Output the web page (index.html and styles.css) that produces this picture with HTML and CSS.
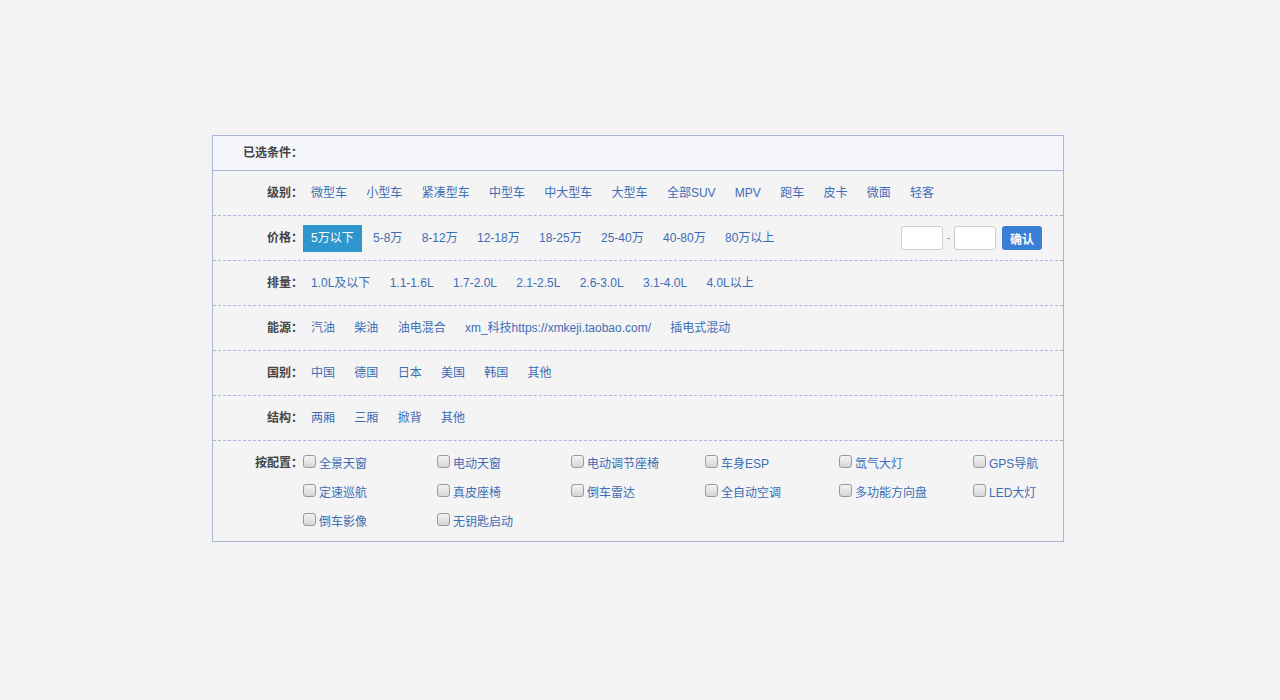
FILE: index.html
```html
<!DOCTYPE html>
<html lang="zh-CN">
<head>
<meta charset="utf-8">
<title>条件筛选</title>
<link rel="stylesheet" href="styles.css">
</head>
<body>
<div class="filter">
  <div class="row row-head">
    <div class="label">已选条件：</div>
    <div class="items"></div>
  </div>
  <div class="row">
    <div class="label">级别：</div>
    <div class="items">
      <a class="item">微型车</a><a class="item">小型车</a><a class="item">紧凑型车</a><a class="item">中型车</a><a class="item">中大型车</a><a class="item">大型车</a><a class="item">全部SUV</a><a class="item">MPV</a><a class="item">跑车</a><a class="item">皮卡</a><a class="item">微面</a><a class="item">轻客</a>
    </div>
  </div>
  <div class="row">
    <div class="label">价格：</div>
    <div class="items">
      <a class="item active">5万以下</a><a class="item">5-8万</a><a class="item">8-12万</a><a class="item">12-18万</a><a class="item">18-25万</a><a class="item">25-40万</a><a class="item">40-80万</a><a class="item">80万以上</a>
    </div>
    <div class="range">
      <input class="num" type="text"><span class="dash">-</span><input class="num" type="text"><button class="ok">确认</button>
    </div>
  </div>
  <div class="row">
    <div class="label">排量：</div>
    <div class="items">
      <a class="item">1.0L及以下</a><a class="item">1.1-1.6L</a><a class="item">1.7-2.0L</a><a class="item">2.1-2.5L</a><a class="item">2.6-3.0L</a><a class="item">3.1-4.0L</a><a class="item">4.0L以上</a>
    </div>
  </div>
  <div class="row">
    <div class="label">能源：</div>
    <div class="items">
      <a class="item">汽油</a><a class="item">柴油</a><a class="item">油电混合</a><a class="item">xm_科技https://xmkeji.taobao.com/</a><a class="item">插电式混动</a>
    </div>
  </div>
  <div class="row">
    <div class="label">国别：</div>
    <div class="items">
      <a class="item">中国</a><a class="item">德国</a><a class="item">日本</a><a class="item">美国</a><a class="item">韩国</a><a class="item">其他</a>
    </div>
  </div>
  <div class="row">
    <div class="label">结构：</div>
    <div class="items">
      <a class="item">两厢</a><a class="item">三厢</a><a class="item">掀背</a><a class="item">其他</a>
    </div>
  </div>
  <div class="row row-config">
    <div class="label">按配置：</div>
    <div class="checks">
      <label class="check"><input type="checkbox"><span>全景天窗</span></label>
      <label class="check"><input type="checkbox"><span>电动天窗</span></label>
      <label class="check"><input type="checkbox"><span>电动调节座椅</span></label>
      <label class="check"><input type="checkbox"><span>车身ESP</span></label>
      <label class="check"><input type="checkbox"><span>氙气大灯</span></label>
      <label class="check"><input type="checkbox"><span>GPS导航</span></label>
      <label class="check"><input type="checkbox"><span>定速巡航</span></label>
      <label class="check"><input type="checkbox"><span>真皮座椅</span></label>
      <label class="check"><input type="checkbox"><span>倒车雷达</span></label>
      <label class="check"><input type="checkbox"><span>全自动空调</span></label>
      <label class="check"><input type="checkbox"><span>多功能方向盘</span></label>
      <label class="check"><input type="checkbox"><span>LED大灯</span></label>
      <label class="check"><input type="checkbox"><span>倒车影像</span></label>
      <label class="check"><input type="checkbox"><span>无钥匙启动</span></label>
    </div>
  </div>
</div>
</body>
</html>
```
FILE: styles.css
```css
html, body {
  margin: 0;
  padding: 0;
  background: #f3f3f3;
}
body {
  font-family: "Liberation Sans", "Noto Sans CJK SC", sans-serif;
  font-size: 12px;
  color: #444;
  padding-top: 135px;
}
.filter {
  width: 850px;
  margin-left: 212px;
  border: 1px solid #a9b6dc;
  background: #f4f4f4;
}
.row {
  display: flex;
  align-items: center;
  height: 44px;
  border-bottom: 1px dashed #a9b6dc;
}
.row-head {
  height: 34px;
  background: #f5f6fb;
  border-bottom: 1px solid #a9b6dc;
}
.label {
  width: 90px;
  flex: none;
  text-align: right;
  font-weight: bold;
  color: #444;
  line-height: 16px;
  margin-top: -1px;
}
.items {
  display: flex;
  align-items: center;
  gap: 3.3px;
  flex: 1;
}
.item {
  display: block;
  padding: 0 8px;
  line-height: 26px;
  color: #3d6db5;
  white-space: nowrap;
  cursor: pointer;
}
.item.active {
  background: #2e96cc;
  color: #fff;
  line-height: 27px;
}
.range {
  display: flex;
  align-items: center;
  padding-right: 21px;
}
.num {
  box-sizing: border-box;
  width: 42px;
  height: 24px;
  border: 1px solid #cfcfcf;
  border-radius: 3px;
  background: #fff;
  margin: 0;
}
.dash {
  width: 11px;
  text-align: center;
  color: #999;
}
.ok {
  box-sizing: border-box;
  width: 40px;
  height: 24px;
  margin: 0 0 0 6px;
  border: none;
  border-radius: 3px;
  background: #3a7fd5;
  color: #fff;
  font-family: inherit;
  font-size: 12px;
  font-weight: bold;
  padding: 0;
}
.row-config {
  height: auto;
  align-items: flex-start;
  border-bottom: none;
  padding: 7px 0 6px;
}
.row-config .label {
  line-height: 29px;
  margin-top: 1px;
}
.checks {
  display: grid;
  grid-template-columns: repeat(6, 134px);
  grid-auto-rows: 29px;
}
.check {
  display: flex;
  align-items: center;
  color: #3d6db5;
  cursor: pointer;
}
.check input {
  appearance: none;
  -webkit-appearance: none;
  box-sizing: border-box;
  width: 13px;
  height: 13px;
  margin: -3px 3px 0 0;
  border: 1px solid #9a9a9a;
  border-radius: 3px;
  background: linear-gradient(#f4f4f4, #d6d6d6);
}
```
